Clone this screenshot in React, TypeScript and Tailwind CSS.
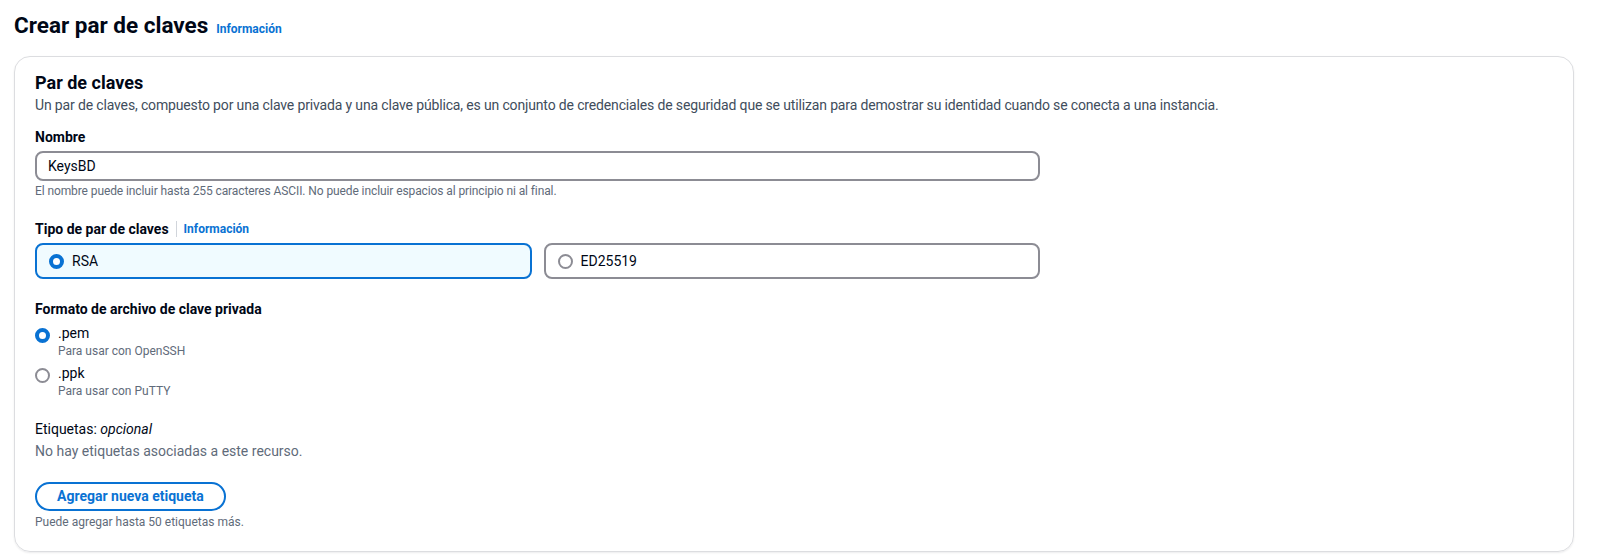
import React from "react";

function Radio({ checked }: { checked: boolean }) {
  return checked ? (
    <span className="box-border inline-block h-[15px] w-[15px] shrink-0 rounded-full border-[4px] border-[#0972d3] bg-white" />
  ) : (
    <span className="box-border inline-block h-[15px] w-[15px] shrink-0 rounded-full border-[2px] border-[#8c8c94] bg-white" />
  );
}

function InfoLink({ className = "" }: { className?: string }) {
  return <a className={`text-[12px] font-bold tracking-normal text-[#0972d3] ${className}`}>Información</a>;
}

export default function App() {
  return (
    <div className="min-h-[558px] bg-white px-[14px] pt-[11px] font-['Roboto',sans-serif] text-[#000716]">
      <div className="flex items-baseline gap-[8px]">
        <h1 className="text-[22.5px] font-bold leading-[28px]">Crear par de claves</h1>
        <InfoLink />
      </div>

      <div className="mt-[17px] w-[1560px] rounded-[16px] border border-[#dcdde0] px-[20px] pb-[21px] pt-[14px] shadow-[0_1px_2px_rgba(0,7,22,0.08)]">
        <h2 className="text-[18px] font-bold leading-[24px]">Par de claves</h2>
        <p className="text-[14px] leading-[20px] tracking-[-0.15px] text-[#414d5c]">
          Un par de claves, compuesto por una clave privada y una clave pública, es un conjunto de credenciales de seguridad que se utilizan para demostrar su identidad cuando se conecta a una instancia.
        </p>

        <div className="mt-[12px] text-[14px] font-bold leading-[20px]">Nombre</div>
        <div className="mt-[4px] flex h-[30px] w-[1005px] items-center rounded-[8px] border-[2px] border-[#8c8c94] px-[11px] text-[14px]">
          KeysBD
        </div>
        <p className="mt-[2px] text-[12px] leading-[16px] tracking-[-0.1px] text-[#5f6b7a]">
          El nombre puede incluir hasta 255 caracteres ASCII. No puede incluir espacios al principio ni al final.
        </p>

        <div className="mt-[20px] flex items-center text-[14px] leading-[20px]">
          <span className="font-bold">Tipo de par de claves</span>
          <span className="mx-[7px] h-[16px] w-px bg-[#d1d5db]" />
          <InfoLink />
        </div>
        <div className="mt-[4px] flex w-[1005px] gap-[12px]">
          <div className="flex h-[36px] flex-1 items-center gap-[8px] rounded-[8px] border-[2px] border-[#0972d3] bg-[#f0fbff] px-[12px] text-[14px]">
            <Radio checked />
            <span>RSA</span>
          </div>
          <div className="flex h-[36px] flex-1 items-center gap-[8px] rounded-[8px] border-[2px] border-[#8c8c94] bg-white px-[12px] text-[14px]">
            <Radio checked={false} />
            <span>ED25519</span>
          </div>
        </div>

        <div className="mt-[20px] text-[14px] font-bold leading-[20px]">Formato de archivo de clave privada</div>
        <div className="mt-[4px] flex flex-col gap-[4px]">
          <div className="flex gap-[8px]">
            <span className="mt-[3px]"><Radio checked /></span>
            <div>
              <div className="text-[14px] leading-[20px]">.pem</div>
              <div className="text-[12px] leading-[16px] text-[#5f6b7a]">Para usar con OpenSSH</div>
            </div>
          </div>
          <div className="flex gap-[8px]">
            <span className="mt-[3px]"><Radio checked={false} /></span>
            <div>
              <div className="text-[14px] leading-[20px]">.ppk</div>
              <div className="text-[12px] leading-[16px] text-[#5f6b7a]">Para usar con PuTTY</div>
            </div>
          </div>
        </div>

        <div className="mt-[20px] text-[14px] leading-[20px]">
          Etiquetas: <i>opcional</i>
        </div>
        <p className="mt-[2px] text-[14px] leading-[20px] text-[#5f6b7a]">No hay etiquetas asociadas a este recurso.</p>

        <button className="mt-[21px] flex h-[29px] items-center rounded-full border-[2px] border-[#0972d3] bg-white px-[20px] text-[14px] font-bold text-[#0972d3]">
          Agregar nueva etiqueta
        </button>
        <p className="mt-[3px] text-[12px] leading-[16px] text-[#5f6b7a]">Puede agregar hasta 50 etiquetas más.</p>
      </div>
    </div>
  );
}
